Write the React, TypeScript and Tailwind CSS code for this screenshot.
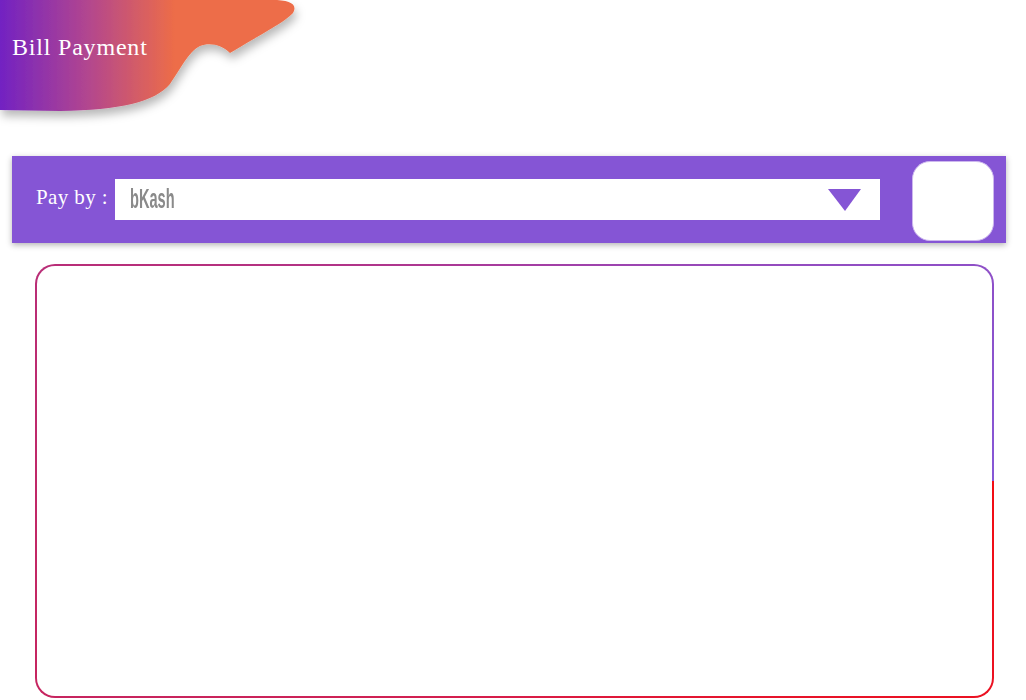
import React from "react";

function HeaderBlob() {
  return (
    <svg width="320" height="140" viewBox="0 0 320 140" className="absolute left-0 top-0">
      <defs>
        <linearGradient id="hg" x1="0" y1="0" x2="175" y2="0" gradientUnits="userSpaceOnUse">
          <stop offset="0" stopColor="#7222c2" />
          <stop offset="0.5" stopColor="#b2468f" />
          <stop offset="1" stopColor="#ed6d48" />
        </linearGradient>
        <filter id="sh" x="-20%" y="-20%" width="140%" height="150%">
          <feDropShadow dx="2" dy="6" stdDeviation="5" floodColor="#000" floodOpacity="0.28" />
        </filter>
      </defs>
      <path
        d="M0,0 L272,0 C290,0 298,4 293,13 C285,22 260,35 230,53 C222,45 210,42 200,46 C188,52 180,70 170,84 C155,102 120,110 60,111 L0,110 Z"
        fill="url(#hg)"
        filter="url(#sh)"
      />
    </svg>
  );
}

export default function App() {
  return (
    <div className="w-[1026px] h-[700px] bg-white overflow-hidden font-['Liberation_Serif',serif]">
      <div className="relative h-[156px]">
        <HeaderBlob />
        <div className="absolute left-[12px] top-[34px] text-white text-[24px] leading-[26px] tracking-[0.8px]">
          Bill Payment
        </div>
      </div>
      <div className="mx-[12px] w-[994px] h-[87px] bg-[#8555d5] shadow-[0_2px_6px_rgba(0,0,0,0.3)] flex items-start pl-[24px]">
        <div className="w-[79px] mt-[29px] text-white text-[21px] leading-[24px] tracking-[0.4px] whitespace-nowrap">
          Pay by :
        </div>
        <div className="mt-[23px] w-[765px] h-[41px] bg-white flex items-center pl-[15px] pr-[19px]">
          <div className="flex-1 h-[41px] flex items-center overflow-hidden">
            <span className="inline-block origin-left scale-x-[0.54] text-[#8a8a8a] text-[27px] leading-none font-bold font-['Liberation_Sans',sans-serif]">
              bKash
            </span>
          </div>
          <svg width="33" height="22" viewBox="0 0 33 22">
            <polygon points="0,0 33,0 17,22" fill="#8555d5" />
          </svg>
        </div>
        <div className="ml-[32px] mt-[5px] w-[82px] h-[80px] bg-white rounded-[18px] border border-[#cdb8ee]" />
      </div>
      <div className="ml-[35px] mt-[21px] w-[959px] h-[434px] rounded-[20px] p-[2px] bg-[conic-gradient(from_90deg,#f20d14,#d81c48_25%,#c02868_50%,#a63ca0_75%,#8657d6)]">
        <div className="w-full h-full rounded-[18px] bg-white" />
      </div>
    </div>
  );
}
